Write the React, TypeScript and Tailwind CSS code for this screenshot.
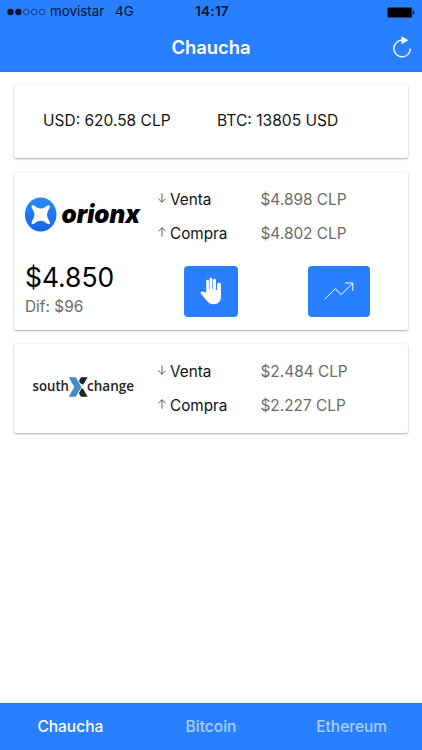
import type { ReactNode } from "react";

function Card({ className, children }: { className: string; children: ReactNode }) {
  return (
    <section
      className={`rounded-[2px] bg-white shadow-[0_1px_2px_rgba(0,0,0,0.30),0_0_2px_rgba(0,0,0,0.08)] ${className}`}
    >
      {children}
    </section>
  );
}

function Arrow({ up = false }: { up?: boolean }) {
  return (
    <svg
      className={`mr-1 mb-[3px] h-[10px] w-2 shrink-0 ${up ? "rotate-180" : ""}`}
      viewBox="0 0 8 10"
      fill="none"
      stroke="#333"
      strokeWidth="0.8"
    >
      <path d="M4 0.3V9.2M0.2 5.5L4 9.3L7.8 5.5" />
    </svg>
  );
}

function Price({ label, value, up }: { label: string; value: string; up?: boolean }) {
  return (
    <div className="flex h-[34px] items-center">
      <div className="flex w-[102.5px] items-center">
        <Arrow up={up} />
        <span className="text-[15.3px] text-[#111]">{label}</span>
      </div>
      <span className="text-[15.4px] text-[#6c6c6c]">{value}</span>
    </div>
  );
}

function OrionxLogo() {
  return (
    <svg className="h-[36px] w-[118px] overflow-visible" viewBox="0 0 118 36">
      <defs>
        <linearGradient id="orb" x1="0" y1="0" x2="0" y2="1">
          <stop offset="0" stopColor="#2a8aff" />
          <stop offset="1" stopColor="#1764ec" />
        </linearGradient>
      </defs>
      <ellipse cx="15.7" cy="18.6" rx="15.8" ry="17" fill="url(#orb)" />
      <path
        d="M8.6 9.3L12.2 11.8Q15.7 13.3 19.2 11.8L22.8 9.3Q25.4 8.7 24.8 11.5L22.6 15.6Q21.5 18.7 22.6 21.8L24.8 25.9Q25.4 28.7 22.8 28.1L19.2 25.6Q15.7 24.1 12.2 25.6L8.6 28.1Q6 28.7 6.6 25.9L8.8 21.8Q9.9 18.7 8.8 15.6L6.6 11.5Q6 8.7 8.6 9.3Z"
        fill="#fff"
      />
      <text
        x="36.5"
        y="27"
        textLength="78.5"
        lengthAdjust="spacingAndGlyphs"
        className="font-['Inter',sans-serif] text-[26px] font-black italic"
      >
        orionx
      </text>
    </svg>
  );
}

function SouthXchangeLogo() {
  return (
    <svg className="h-[24px] w-[108px] overflow-visible" viewBox="0 0 108 24" fill="#222">
      <g className="font-['Open_Sans',sans-serif] text-[14.6px] font-semibold">
        <text x="0.5" y="14.8" textLength="36.5" lengthAdjust="spacingAndGlyphs">
          south
        </text>
        <text x="55" y="14.8" textLength="47" lengthAdjust="spacingAndGlyphs">
          change
        </text>
      </g>
      <path d="M36.7 1.2H43.7L49.5 11L43.7 20.8H36.7L42.3 11Z" fill="#438bc9" />
      <path d="M49 1.2H55.6L51.2 8.7L48.3 7.3L46.9 4.9ZM49.8 12L51.5 13.5L55.6 20.8H49L46.9 17.2Z" />
    </svg>
  );
}

function StatusBar() {
  return (
    <div className="grid h-6 grid-cols-3 items-center px-[7px] text-[#06142c]">
      <div className="flex items-center">
        <svg className="h-2 w-[39px]" viewBox="0 0 39 8">
          <g fill="#06142c">
            <circle cx="3.5" cy="4" r="3.2" />
            <circle cx="11.4" cy="4" r="3.2" />
          </g>
          <g fill="none" stroke="#06142c" strokeWidth="0.6">
            <circle cx="19.3" cy="4" r="2.8" />
            <circle cx="27.2" cy="4" r="2.8" />
            <circle cx="35.1" cy="4" r="2.8" />
          </g>
        </svg>
        <span className="ml-1 w-[65px] shrink-0 text-[13.4px]">movistar</span>
        <span className="text-[13.4px]">4G</span>
      </div>
      <span className="pl-[2px] text-center text-[13.6px] font-semibold tracking-[0.2px]">14:17</span>
      <svg className="h-[11px] w-7 justify-self-end" viewBox="0 0 28 11">
        <rect x="0.5" y="0.5" width="24.5" height="10" rx="1.5" fill="#000" stroke="#17458b" />
        <path d="M26 3.5Q27.5 4 27.5 5.5T26 7.5Z" fill="#06142c" />
      </svg>
    </div>
  );
}

export default function App() {
  return (
    <div className="flex h-[750px] w-[422px] flex-col bg-white font-['Inter',sans-serif] leading-none text-[#151515]">
      <header className="h-[72px] shrink-0 border-b border-[#3476dc] bg-[#287fff]">
        <StatusBar />
        <div className="grid h-[46px] grid-cols-[1fr_auto_1fr] items-center">
          <h1 className="col-start-2 text-[18.4px] font-semibold text-white">Chaucha</h1>
          <svg className="mr-[10px] h-[22px] w-5 justify-self-end" viewBox="0 0 20 22" fill="none">
            <path d="M10.5 4.2A8.3 8.3 0 1 0 18.4 12.4" stroke="#fff" strokeWidth="1.3" />
            <path d="M9.5 0.3L16.4 4.3L9.5 8.2Z" fill="#fff" />
          </svg>
        </div>
      </header>

      <main className="flex flex-1 flex-col gap-[14px] px-[14px] pt-[13px]">
        <Card className="flex h-[73px] items-center pb-[1px] pl-[29px] text-[15.5px]">
          <span className="w-[174px]">USD: 620.58 CLP</span>
          <span className="text-[15.6px]">BTC: 13805 USD</span>
        </Card>

        <Card className="h-[158px] pt-[11px]">
          <div className="flex">
            <div className="w-[144px] pt-[13px] pl-[11px]">
              <OrionxLogo />
            </div>
            <div>
              <Price label="Venta" value="$4.898 CLP" />
              <Price label="Compra" value="$4.802 CLP" up />
            </div>
          </div>
          <div className="flex pt-[15px] pl-[11px]">
            <div className="w-[159px]">
              <div className="-mt-[2px] text-[26.4px] leading-[27px] text-black">$4.850</div>
              <div className="mt-2 text-[15.4px] text-[#6c6c6c]">Dif: $96</div>
            </div>
            <button className="flex h-[51px] w-[54px] items-center justify-center rounded-[4px] bg-[#287fff]">
              <svg className="mb-[2px] h-7 w-[22px]" viewBox="0 0 22 28" fill="#fff">
                <path d="M6.2 15.8V4.1C6.2 2.2 8.7 2.2 8.9 4.1V12.5H9.5V2.2C9.5.3 12.3.3 12.4 2.2V12.2H13.1V3.1C13.1 1.2 15.9 1.2 15.9 3.1V13H17V7.2C17 5.3 21 5.3 21 7.2V19C21 24.4 18.2 27.2 14 27.2C10 27.2 7.9 25.6 5.8 22.5L.8 16.6C-.2 15 2.1 13.8 3.5 14.8Z" />
              </svg>
            </button>
            <button className="ml-[70px] flex h-[51px] w-[62px] items-center justify-center rounded-[4px] bg-[#287fff]">
              <svg className="mb-[2px] h-[18px] w-[30px]" viewBox="0 0 30 18" fill="none" stroke="#fff">
                <path d="M0.7 17.2L11.3 6.7L17 12.8L28.8 1M21 1H28.8V8.8" />
              </svg>
            </button>
          </div>
        </Card>

        <Card className="flex h-[89px] pt-[11px]">
          <div className="w-[144px] pt-[21px] pl-[18px]">
            <SouthXchangeLogo />
          </div>
          <div>
            <Price label="Venta" value="$2.484 CLP" />
            <Price label="Compra" value="$2.227 CLP" up />
          </div>
        </Card>
      </main>

      <nav className="grid h-[47px] shrink-0 grid-cols-3 items-center bg-[#287fff] text-center text-[15.5px] font-medium text-[#a9d0ff]">
        <span className="text-white">Chaucha</span>
        <span>Bitcoin</span>
        <span>Ethereum</span>
      </nav>
    </div>
  );
}
